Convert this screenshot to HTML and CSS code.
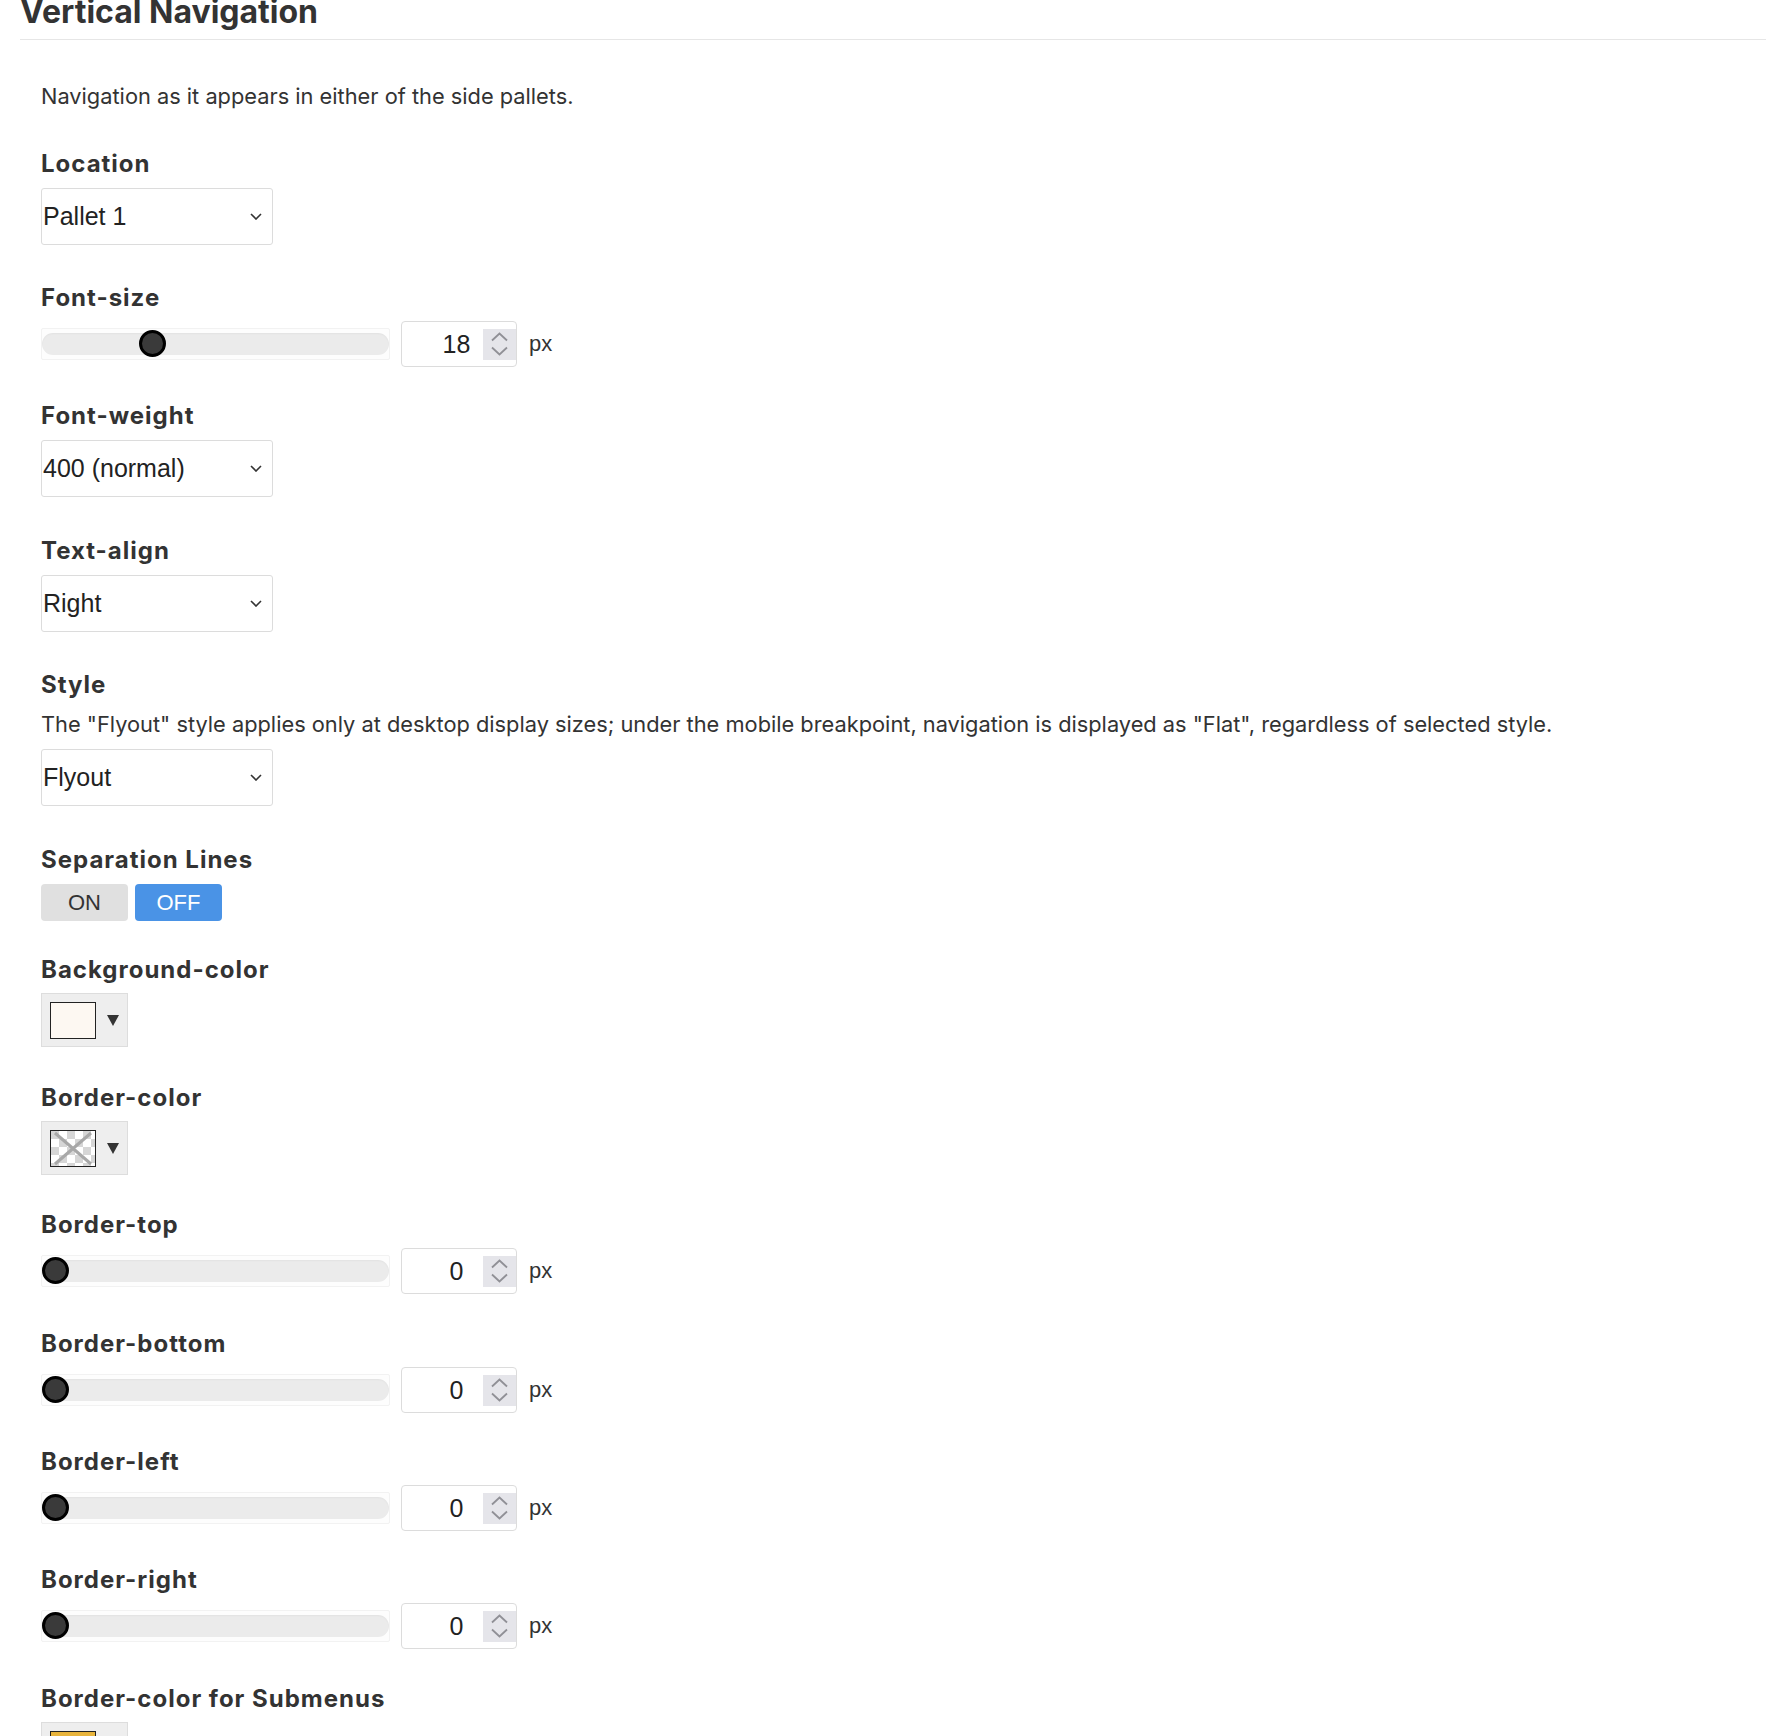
FILE: index.html
```html
<!DOCTYPE html>
<html lang="en">
<head>
<meta charset="utf-8">
<title>Vertical Navigation</title>
<link rel="stylesheet" href="styles.css">
</head>
<body>
<div class="page">
  <div class="header"><h2 class="title">Vertical Navigation</h2></div>
  <div class="content">
    <p class="desc">Navigation as it appears in either of the side pallets.</p>

    <div class="field field-select">
      <div class="label">Location</div>
      <div class="select"><span class="select-text">Pallet 1</span><svg class="chev" width="12" height="7" viewBox="0 0 12 7"><path d="M1 1l5 5 5-5" fill="none" stroke="#333" stroke-width="1.6"/></svg></div>
    </div>

    <div class="field field-range">
      <div class="label">Font-size</div>
      <div class="range-row">
        <div class="range"><div class="track"></div><div class="thumb" style="left:97px"></div></div>
        <div class="num"><span class="num-val">18</span><span class="spin"><svg width="17" height="24" viewBox="0 0 17 24"><path d="M1 8.5L8.5 1.5L16 8.5M1 15.5L8.5 22.5L16 15.5" fill="none" stroke="#909096" stroke-width="1.8"/></svg></span></div>
        <span class="unit">px</span>
      </div>
    </div>

    <div class="field field-select field-wide">
      <div class="label">Font-weight</div>
      <div class="select"><span class="select-text">400 (normal)</span><svg class="chev" width="12" height="7" viewBox="0 0 12 7"><path d="M1 1l5 5 5-5" fill="none" stroke="#333" stroke-width="1.6"/></svg></div>
    </div>

    <div class="field field-select">
      <div class="label">Text-align</div>
      <div class="select"><span class="select-text">Right</span><svg class="chev" width="12" height="7" viewBox="0 0 12 7"><path d="M1 1l5 5 5-5" fill="none" stroke="#333" stroke-width="1.6"/></svg></div>
    </div>

    <div class="field field-select field-wide">
      <div class="label">Style</div>
      <p class="help">The "Flyout" style applies only at desktop display sizes; under the mobile breakpoint, navigation is displayed as "Flat", regardless of selected style.</p>
      <div class="select"><span class="select-text">Flyout</span><svg class="chev" width="12" height="7" viewBox="0 0 12 7"><path d="M1 1l5 5 5-5" fill="none" stroke="#333" stroke-width="1.6"/></svg></div>
    </div>

    <div class="field field-toggle">
      <div class="label">Separation Lines</div>
      <div class="toggle"><span class="btn">ON</span><span class="btn btn-active">OFF</span></div>
    </div>

    <div class="field field-picker">
      <div class="label">Background-color</div>
      <div class="picker"><span class="swatch swatch-cream"></span><svg class="tri" width="12" height="11" viewBox="0 0 12 11"><path d="M0 0h12L6 11z" fill="#333"/></svg></div>
    </div>

    <div class="field field-picker field-tight">
      <div class="label">Border-color</div>
      <div class="picker"><span class="swatch swatch-none"><svg width="44" height="35" viewBox="0 0 44 35"><rect width="44" height="35" fill="#fff"/><g fill="#d6d6d6"><rect x="0" y="0" width="8" height="8"/><rect x="16" y="0" width="8" height="8"/><rect x="32" y="0" width="8" height="8"/><rect x="8" y="8" width="8" height="8"/><rect x="24" y="8" width="8" height="8"/><rect x="40" y="8" width="8" height="8"/><rect x="0" y="16" width="8" height="8"/><rect x="16" y="16" width="8" height="8"/><rect x="32" y="16" width="8" height="8"/><rect x="8" y="24" width="8" height="8"/><rect x="24" y="24" width="8" height="8"/><rect x="40" y="24" width="8" height="8"/><rect x="0" y="32" width="8" height="8"/><rect x="16" y="32" width="8" height="8"/><rect x="32" y="32" width="8" height="8"/></g><path d="M4 2L40 33M40 2L4 33" stroke="#a8a8a8" stroke-width="3"/></svg></span><svg class="tri" width="12" height="11" viewBox="0 0 12 11"><path d="M0 0h12L6 11z" fill="#333"/></svg></div>
    </div>

    <div class="field field-range field-wide">
      <div class="label">Border-top</div>
      <div class="range-row">
        <div class="range"><div class="track"></div><div class="thumb" style="left:0px"></div></div>
        <div class="num"><span class="num-val">0</span><span class="spin"><svg width="17" height="24" viewBox="0 0 17 24"><path d="M1 8.5L8.5 1.5L16 8.5M1 15.5L8.5 22.5L16 15.5" fill="none" stroke="#909096" stroke-width="1.8"/></svg></span></div>
        <span class="unit">px</span>
      </div>
    </div>

    <div class="field field-range">
      <div class="label">Border-bottom</div>
      <div class="range-row">
        <div class="range"><div class="track"></div><div class="thumb" style="left:0px"></div></div>
        <div class="num"><span class="num-val">0</span><span class="spin"><svg width="17" height="24" viewBox="0 0 17 24"><path d="M1 8.5L8.5 1.5L16 8.5M1 15.5L8.5 22.5L16 15.5" fill="none" stroke="#909096" stroke-width="1.8"/></svg></span></div>
        <span class="unit">px</span>
      </div>
    </div>

    <div class="field field-range">
      <div class="label">Border-left</div>
      <div class="range-row">
        <div class="range"><div class="track"></div><div class="thumb" style="left:0px"></div></div>
        <div class="num"><span class="num-val">0</span><span class="spin"><svg width="17" height="24" viewBox="0 0 17 24"><path d="M1 8.5L8.5 1.5L16 8.5M1 15.5L8.5 22.5L16 15.5" fill="none" stroke="#909096" stroke-width="1.8"/></svg></span></div>
        <span class="unit">px</span>
      </div>
    </div>

    <div class="field field-range field-wide">
      <div class="label">Border-right</div>
      <div class="range-row">
        <div class="range"><div class="track"></div><div class="thumb" style="left:0px"></div></div>
        <div class="num"><span class="num-val">0</span><span class="spin"><svg width="17" height="24" viewBox="0 0 17 24"><path d="M1 8.5L8.5 1.5L16 8.5M1 15.5L8.5 22.5L16 15.5" fill="none" stroke="#909096" stroke-width="1.8"/></svg></span></div>
        <span class="unit">px</span>
      </div>
    </div>

    <div class="field field-picker">
      <div class="label">Border-color for Submenus</div>
      <div class="picker"><span class="swatch swatch-gold"></span><svg class="tri" width="12" height="11" viewBox="0 0 12 11"><path d="M0 0h12L6 11z" fill="#333"/></svg></div>
    </div>
  </div>
</div>
</body>
</html>
```

FILE: styles.css
```css
* { box-sizing: border-box; }
html, body { margin: 0; padding: 0; background: #fff; }
body { font-family: Inter, Roboto, "Liberation Sans", sans-serif; color: #333; }

.page { overflow: hidden; }

.header {
  margin-left: 20px;
  border-bottom: 1px solid #e6e6e6;
  padding-bottom: 8px;
}
.title {
  margin: -7px 0 0 0;
  font-family: Inter, Roboto, sans-serif;
  font-weight: 700;
  font-size: 32px;
  line-height: 38px;
  color: #333;
}

.content { padding-left: 41px; }

.desc, .help {
  margin: 0;
  font-family: Inter, Roboto, sans-serif;
  font-size: 21.8px;
  line-height: 30px;
  color: #333;
}
.desc { margin-top: 41px; margin-bottom: 39px; }
.help { margin-top: 1px; margin-bottom: 10px; }

.label {
  font-family: Inter, Roboto, sans-serif;
  font-weight: 700;
  font-size: 24px;
  line-height: 28px;
  letter-spacing: 1px;
  color: #333;
}

.field { margin-bottom: 36px; }
.field-select { margin-bottom: 39px; }
.field-select .label { margin-bottom: 10px; }
.field-range { margin-bottom: 35px; }
.field-range .label { margin-bottom: 9px; }
.field-toggle { margin-bottom: 35px; }
.field-toggle .label { margin-bottom: 10px; }
.field-picker { margin-bottom: 37px; }
.field-picker .label { margin-bottom: 9px; }
.field-select.field-wide { margin-bottom: 40px; }
.field-range.field-wide { margin-bottom: 36px; }
.field-picker.field-tight { margin-bottom: 36px; }

.select {
  width: 232px;
  height: 57px;
  border: 1px solid #dcdcdc;
  border-radius: 3px;
  background: #fff;
  display: flex;
  align-items: center;
  justify-content: space-between;
  padding: 0 10px 0 1px;
}
.select-text {
  font-family: "Liberation Sans", Arial, sans-serif;
  font-size: 25px;
  color: #222;
}
.chev { display: block; }

.range-row { display: flex; align-items: center; }
.range {
  position: relative;
  width: 349px;
  height: 32px;
  border: 1px solid #f2f2f2;
  background: #fdfdfd;
  border-radius: 2px;
  padding: 4px 0;
}
.track {
  height: 22px;
  border-radius: 11px;
  background: #ebebeb;
  box-shadow: inset 0 1px 2px rgba(0,0,0,0.04);
}
.thumb {
  position: absolute;
  top: 1px;
  width: 27px;
  height: 27px;
  border-radius: 50%;
  background: #3a3a3a;
  border: 3px solid #000;
}
.num {
  margin-left: 11px;
  width: 116px;
  height: 46px;
  border: 1px solid #dcdcdc;
  border-radius: 4px;
  background: #fff;
  display: flex;
  align-items: center;
  padding-left: 28px;
}
.num-val {
  flex: 1;
  text-align: center;
  font-family: "Liberation Sans", Arial, sans-serif;
  font-size: 25px;
  color: #222;
}
.spin {
  width: 33px;
  height: 31px;
  background: #e5e5ea;
  display: flex;
  align-items: center;
  justify-content: center;
}
.spin svg { display: block; }
.unit {
  margin-left: 12px;
  font-family: "Liberation Sans", Arial, sans-serif;
  font-size: 22px;
  color: #333;
}

.toggle { display: flex; gap: 7px; }
.btn {
  width: 87px;
  height: 37px;
  border-radius: 4px;
  background: #e0e0e0;
  color: #333;
  font-family: "Liberation Sans", Arial, sans-serif;
  font-size: 22px;
  display: flex;
  align-items: center;
  justify-content: center;
}
.btn-active { background: #4a93e6; color: #fff; }

.picker {
  width: 87px;
  height: 54px;
  background: #eeeeee;
  border: 1px solid #dddddd;
  display: flex;
  align-items: center;
  padding-left: 8px;
}
.swatch {
  width: 46px;
  height: 37px;
  border: 1px solid #222;
  display: block;
  overflow: hidden;
}
.swatch svg { display: block; }
.swatch-cream { background: #fdf8f2; }
.swatch-gold { background: #e8b43c; }
.tri { margin-left: 11px; display: block; }
```
